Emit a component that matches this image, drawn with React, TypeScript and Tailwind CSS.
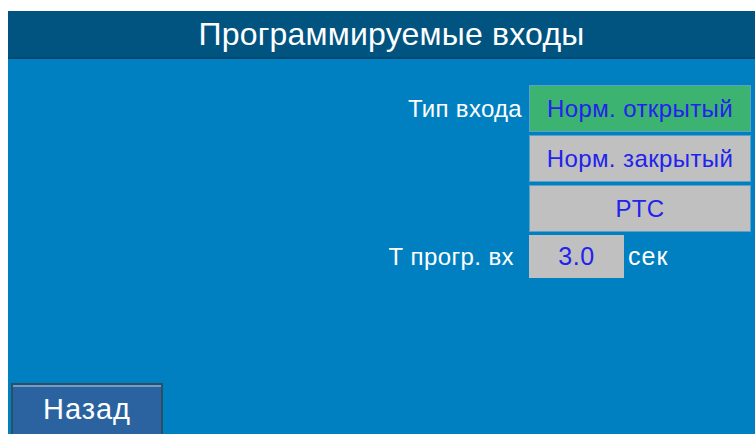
import React from "react";

const font = { fontFamily: '"Liberation Sans", Arial, sans-serif' };

function OptionButton({
  label,
  active,
  className = "",
}: {
  label: string;
  active?: boolean;
  className?: string;
}) {
  return (
    <div
      className={`flex items-center justify-center border border-[#5aa0c8] text-[24px] tracking-[0.4px] text-[#2222ee] ${
        active ? "bg-[#3cb371]" : "bg-[#c0c0c0]"
      } ${className}`}
    >
      {label}
    </div>
  );
}

export default function App() {
  return (
    <div
      className="flex h-[434px] w-[755px] flex-col overflow-hidden bg-white pl-[8px] pt-[11px]"
      style={font}
    >
      {/* title bar */}
      <div className="flex h-[48px] items-center justify-center border-b-2 border-[#004a72] bg-[#00547f] pl-[20px] text-[32px] tracking-[0.2px] text-white">
        Программируемые входы
      </div>

      {/* settings panel */}
      <div className="flex flex-1 flex-col bg-[#0080c0] pr-[4px] pt-[26px]">
        <div className="grid grid-cols-[1fr_222px] gap-x-[7px] gap-y-[3px] text-[24px] text-white">
          <div className="flex h-[47px] items-center justify-end tracking-[0.3px]">Тип входа</div>
          <OptionButton label="Норм. открытый" active className="h-[47px]" />

          <div />
          <OptionButton label="Норм. закрытый" className="h-[47px]" />

          <div />
          <OptionButton label="PTC" className="h-[47px]" />

          <div className="flex h-[43px] items-center justify-end pr-[8px] tracking-[0.4px]">
            Т прогр. вх
          </div>
          <div className="flex h-[43px] items-center gap-[4px]">
            <div className="flex h-full w-[95px] items-center justify-center bg-[#c0c0c0] text-[25px] tracking-[0.5px] text-[#2222ee]">
              3.0
            </div>
            <span className="text-[25px] tracking-[1px]">сек</span>
          </div>
        </div>

        {/* back button */}
        <div className="mt-auto ml-[3px] flex h-[51px] w-[152px] items-center justify-center border-2 border-b-0 border-[#2c4f63] bg-[#2b63a0] text-[29px] tracking-[1px] text-white shadow-[inset_0_2px_0_#6f9cc8]">
          Назад
        </div>
      </div>
    </div>
  );
}
